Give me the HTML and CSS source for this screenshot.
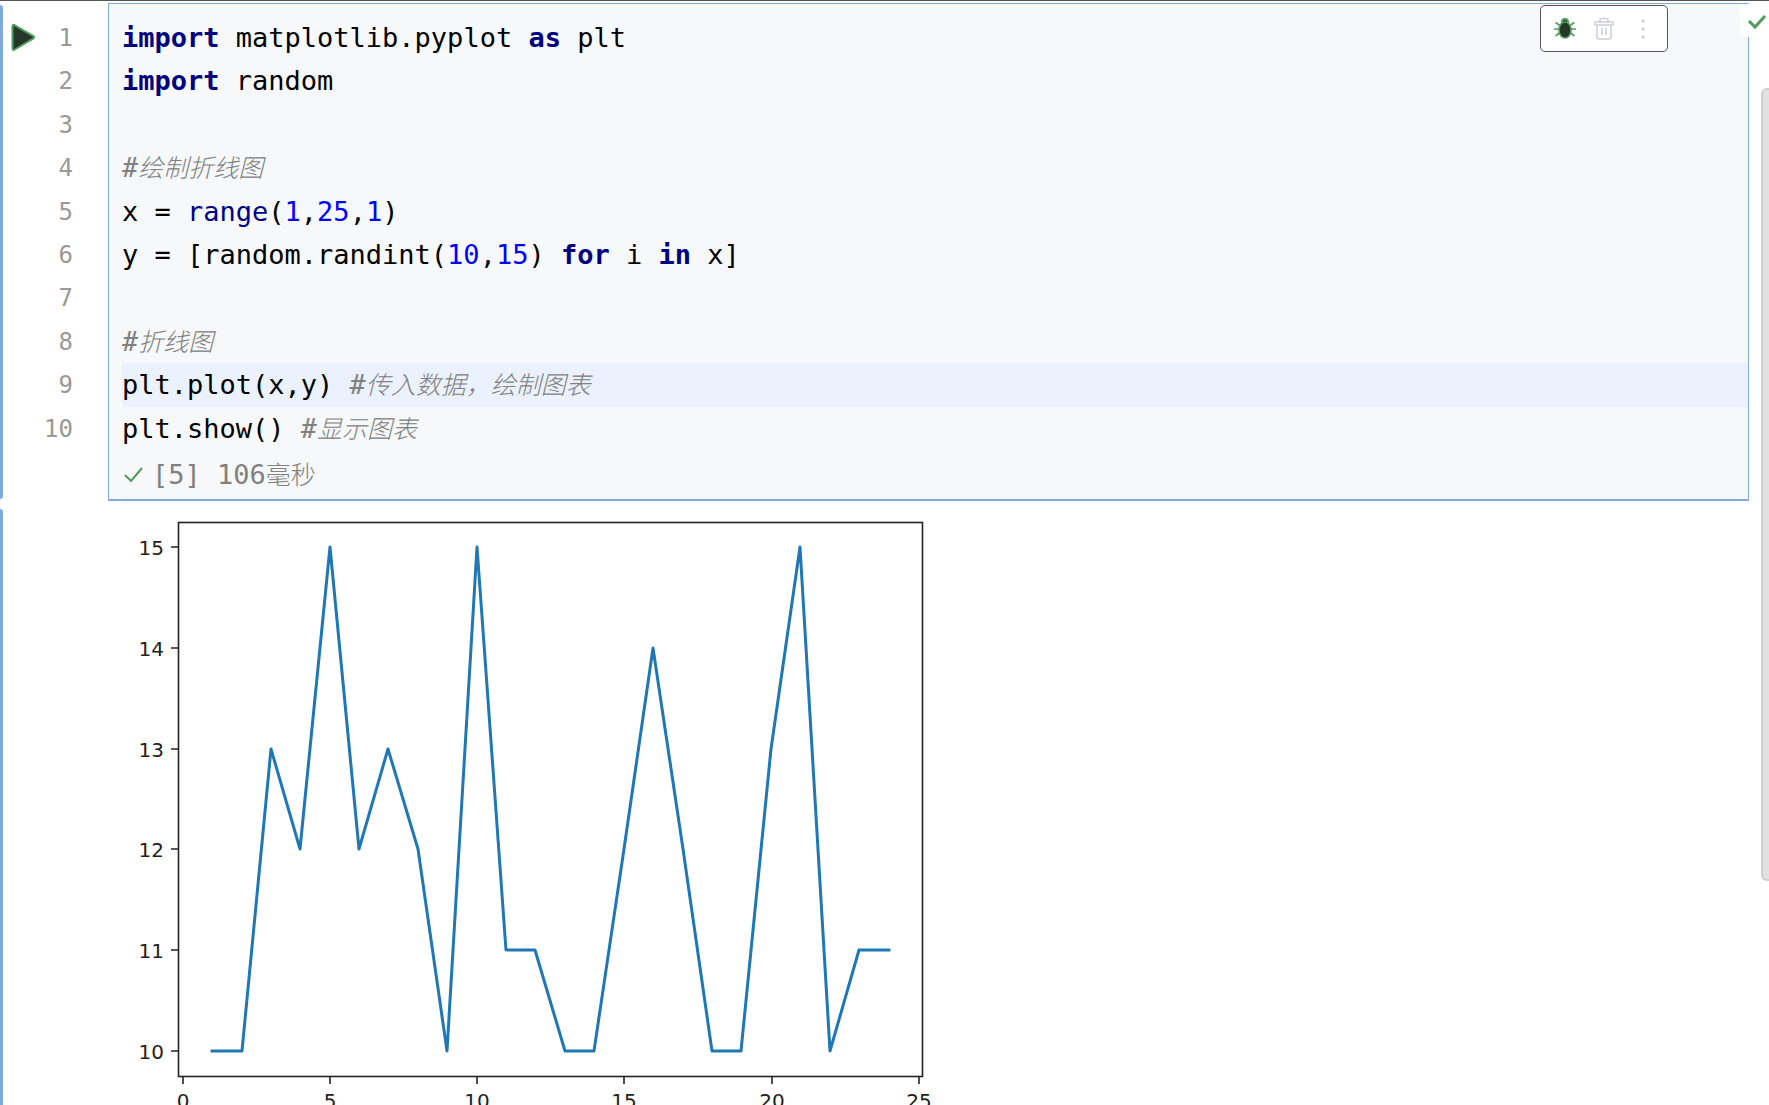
FILE: index.html
```html
<!DOCTYPE html>
<html lang="zh-CN">
<head>
	<meta charset="UTF-8">
	<meta name="viewport" content="width=device-width, initial-scale=1.0">
	<title>matplotlib 折线图</title>
	<link rel="stylesheet" href="styles.css">
</head>
<body>
	<main class="notebook">
		<section class="cell">
			<div class="gutter">
				<button class="run" aria-label="运行单元格">
					<svg width="26" height="30" viewBox="0 0 26 30"><path d="M2.5 3.5Q2.5 1 4.8 2.3L23 12.8Q25.2 14.2 23 15.6L4.8 26.5Q2.5 27.8 2.5 25.3Z" fill="#263629" stroke="#539b5c" stroke-width="2"/></svg>
				</button>
				<div class="lines numbers">
					<span>1</span>
					<span>2</span>
					<span>3</span>
					<span>4</span>
					<span>5</span>
					<span>6</span>
					<span>7</span>
					<span>8</span>
					<span>9</span>
					<span>10</span>
				</div>
			</div>
			<div class="editor">
				<code class="lines">
					<span class="line"><b>import</b> matplotlib.pyplot <b>as</b> plt</span>
					<span class="line"><b>import</b> random</span>
					<span class="line"></span>
					<span class="line"><i>#<span class="han">绘制折线图</span></i></span>
					<span class="line">x = <span class="fn">range</span>(<span class="num">1</span>,<span class="num">25</span>,<span class="num">1</span>)</span>
					<span class="line">y = [random.randint(<span class="num">10</span>,<span class="num">15</span>) <b>for</b> i <b>in</b> x]</span>
					<span class="line"></span>
					<span class="line"><i>#<span class="han">折线图</span></i></span>
					<span class="line current">plt.plot(x,y) <i>#<span class="han">传入数据，绘制图表</span></i></span>
					<span class="line">plt.show() <i>#<span class="han">显示图表</span></i></span>
				</code>
				<div class="status">
					<svg width="22" height="20" viewBox="0 0 22 20"><path d="M3 10L9 16L20 3" fill="none" stroke="#539b5c" stroke-width="2"/></svg>
					<span>[5] 106<span class="han">毫秒</span></span>
				</div>
				<div class="toolbar">
					<button aria-label="调试单元格">
						<svg width="24" height="24" viewBox="0 0 24 24">
							<path d="M1 12H23M2.5 5.5L7 8.5M21.5 5.5L17 8.5M2.5 19L7 15.5M21.5 19L17 15.5" stroke="#539b5c" stroke-width="1.6" fill="none"/>
							<path d="M8 6.5V5Q8 1 12 1T16 5V6.5Z" fill="#539b5c"/>
							<path d="M10 5Q10 3 12 3T14 5Z" fill="#263629"/>
							<ellipse cx="12" cy="13" rx="6" ry="8" fill="#263629" stroke="#539b5c" stroke-width="1.6"/>
						</svg>
					</button>
					<button aria-label="删除单元格">
						<svg width="24" height="24" viewBox="0 0 24 24" fill="none" stroke="#cdced6" stroke-width="1.5">
							<path d="M3 5H21V8H3ZM8 5V3Q8 1.5 9.5 1.5H14.5Q16 1.5 16 3V5M5 8V19.5Q5 22 7.5 22H16.5Q19 22 19 19.5V8M10 11V18M14 11V18"/>
						</svg>
					</button>
					<button aria-label="更多操作">
						<svg width="24" height="24" viewBox="0 0 24 24" fill="#cdced6"><circle cx="12" cy="4" r="1.7"/><circle cx="12" cy="12" r="1.7"/><circle cx="12" cy="20" r="1.7"/></svg>
					</button>
				</div>
			</div>
		</section>
		<section class="output">
			<svg class="chart" width="820" height="620" viewBox="0 0 820 620">
				<rect x="56.5" y="13.5" width="744" height="554"/>
				<path d="M56 38h-7M56 139h-7M56 240h-7M56 340h-7M56 441h-7M56 542h-7"/>
				<path d="M61 568v7M208 568v7M355 568v7M502 568v7M650 568v7M797 568v7"/>
				<polyline points="90,542 120,542 149,240 178,340 208,38 237,340 266,240 296,340 325,542 355,38 384,441 413,441 443,542 472,542 502,340 531,139 561,340 590,542 619,542 649,240 678,38 708,542 737,441 767,441"/>
				<g class="y">
					<text x="42" y="46">15</text>
					<text x="42" y="147">14</text>
					<text x="42" y="248">13</text>
					<text x="42" y="348">12</text>
					<text x="42" y="449">11</text>
					<text x="42" y="550">10</text>
				</g>
				<g class="x">
					<text x="61" y="599">0</text>
					<text x="208" y="599">5</text>
					<text x="355" y="599">10</text>
					<text x="502" y="599">15</text>
					<text x="650" y="599">20</text>
					<text x="797" y="599">25</text>
				</g>
			</svg>
		</section>
	</main>
	<div class="inspection">
		<svg width="22" height="18" viewBox="0 0 22 18"><path d="M3 8L9 14L19 3" fill="none" stroke="#539b5c" stroke-width="3"/></svg>
	</div>
	<div class="scrollbar"></div>
</body>
</html>
```
FILE: styles.css
```css
* {
	box-sizing: border-box;
}
html, body {
	margin: 0;
	padding: 0;
}
body {
	position: relative;
	height: 100vh;
	overflow: hidden;
	border-top: 1px solid #575359;
	background-color: white;
	font-family: "DejaVu Sans Mono", "Noto Sans CJK SC", monospace;
	font-size: 27px;
}
button {
	display: flex;
	padding: 0;
	border: none;
	background: none;
}
svg {
	display: block;
}
.notebook {
	padding: 2px 20px 0 0;
}
.cell {
	display: flex;
	margin-bottom: 8px;
}
.gutter {
	display: flex;
	justify-content: space-between;
	width: 108px;
	padding: 14px 35px 0 10px;
	position: relative;
}
/* blue marker of the selected cell */
.gutter::before, .output::before {
	content: "";
	position: absolute;
	top: 2px;
	left: 0;
	bottom: 2px;
	width: 3px;
	border-radius: 0 3px 3px 0;
	background-color: #7eaadc;
}
.output::before {
	top: 0;
	bottom: 0;
}
.run {
	align-self: flex-start;
	padding-top: 6px;
}
.lines {
	display: grid;
	grid-auto-rows: 1fr;
	height: 434px;
	line-height: 43px;
	font-family: inherit;
}
.numbers {
	font-size: 24px;
	color: #999;
	text-align: right;
}
.editor {
	position: relative;
	flex: 1;
	padding: 12px 0 0 13px;
	border: 1px solid #7eaadc;
	border-bottom-width: 2px;
	background-color: #f6f8fa;
	color: #000;
}
.line {
	white-space: pre;
}
.current {
	background-color: #ebf2fe;
}
.line b, .fn {
	color: #000080;
}
.num {
	color: #0000ff;
}
.line i {
	color: #808080;
}
.han {
	font-family: "Noto Sans CJK SC", sans-serif;
	font-size: 25px;
	font-weight: 300;
	line-height: 1;
}
.status {
	display: flex;
	align-items: center;
	gap: 8px;
	height: 49px;
	color: #808080;
}
.toolbar {
	position: absolute;
	top: 1px;
	right: 80px;
	display: flex;
	align-items: center;
	gap: 15px;
	height: 47px;
	padding: 0 12px;
	border: 1px solid #575359;
	border-radius: 5px;
	background-color: white;
}
.output {
	position: relative;
	padding-left: 122px;
}
.chart {
	font-family: "DejaVu Sans", sans-serif;
	font-size: 20px;
	fill: #222;
}
.chart rect, .chart path {
	fill: none;
	stroke: #222;
	stroke-width: 1.6;
}
.chart polyline {
	fill: none;
	stroke: #1f77b4;
	stroke-width: 3;
	stroke-linejoin: round;
	stroke-linecap: square;
}
.y text {
	text-anchor: end;
}
.x text {
	text-anchor: middle;
}
.inspection {
	position: absolute;
	top: 3px;
	right: 0;
	padding: 9px 1px 6px 6px;
	border-radius: 6px;
	background-color: white;
}
.scrollbar {
	position: absolute;
	top: 87px;
	right: 0;
	width: 8px;
	height: 793px;
	border: 2px solid #d0d0d0;
	border-right: none;
	border-radius: 6px 0 0 6px;
	background-color: #e1e1e1;
}
```
